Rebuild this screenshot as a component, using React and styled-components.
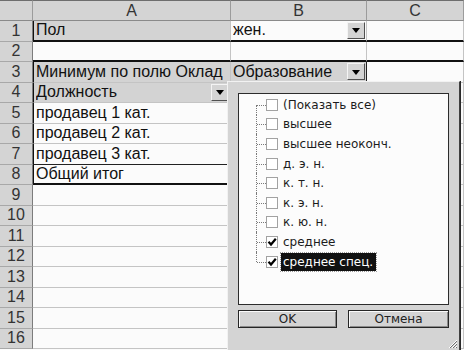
import React from 'react';
import styled, { createGlobalStyle, css } from 'styled-components';

const GlobalStyle = createGlobalStyle`
  html, body { margin: 0; padding: 0; background: #fbfbfb; overflow: hidden; }
  * { box-sizing: border-box; }
`;

const Sheet = styled.div`
  position: relative;
  width: 464px;
  height: 350px;
  overflow: hidden;
  font-family: "Liberation Sans", Arial, sans-serif;
  font-size: 16px;
  color: #111;
  background: #fbfbfb;
  display: grid;
  grid-template-columns: 33px 198px 136px 97px;
  grid-template-rows: 21px repeat(16, 20.5px);
`;

const ColHead = styled.div`
  background: #d4d4d4;
  border-top: 1px solid #6e6e6e;
  border-bottom: 1px solid #8a8a8a;
  border-right: 1px solid #9c9c9c;
  color: #333;
  display: flex;
  align-items: center;
  justify-content: center;
  padding-top: 1px;
`;

const RowHead = styled.div`
  background: #d4d4d4;
  border-right: 1px solid #7c7c7c;
  border-bottom: 1px solid #a8a8a8;
  color: #333;
  display: flex;
  align-items: center;
  justify-content: center;
`;

const Cell = styled.div`
  background: ${(p) => (p.$field ? '#d3d3d3' : '#fbfbfb')};
  border-bottom: 1px solid #c4c4c4;
  border-right: 1px solid #c4c4c4;
  display: flex;
  align-items: center;
  padding-left: 2px;
  white-space: nowrap;
  overflow: hidden;
  ${(p) => p.$darkLeft && css`border-left: 1px solid #111;`}
  ${(p) => p.$darkRight && css`border-right: 1px solid #222;`}
  ${(p) => p.$darkBottom && css`border-bottom: 1px solid #222;`}
  ${(p) => p.$thickBottom && css`border-bottom: 2px solid #111;`}
`;

const CellText = styled.span`
  flex: 1;
  overflow: hidden;
`;

const DropBtn = styled.span`
  flex: none;
  width: 18px;
  height: 17px;
  margin-right: 1px;
  background: #d4d4d4;
  border: 1px solid;
  border-color: #f4f4f4 #505050 #505050 #f4f4f4;
  display: flex;
  align-items: center;
  justify-content: center;
`;

const Arrow = styled.span`
  width: 0;
  height: 0;
  border-left: 4px solid transparent;
  border-right: 4px solid transparent;
  border-top: 5px solid #000;
  margin-top: 1px;
`;

const Popup = styled.div`
  position: absolute;
  left: 227px;
  top: 81px;
  width: 233px;
  height: 270px;
  background: #d4d4d4;
  border: 1px solid;
  border-color: #f2f2f2 #404040 #404040 #f2f2f2;
  box-shadow: 1px 0 0 #2a2a2a;
  padding: 11px 10px 0 10px;
  display: flex;
  flex-direction: column;
  gap: 5px;
  font-family: "DejaVu Sans", Verdana, sans-serif;
  font-size: 12px;
`;

const ListBox = styled.div`
  width: 211px;
  height: 212px;
  background: #fcfcfc;
  border: 1px solid #2c2c2c;
  padding-top: 1px;
  display: flex;
  flex-direction: column;
`;

const Item = styled.div`
  height: 19.6px;
  display: flex;
  align-items: center;
  padding-left: 17px;
`;

const Connector = styled.span`
  position: relative;
  align-self: stretch;
  width: 10px;
  flex: none;
  &::before {
    content: '';
    position: absolute;
    left: 0;
    top: ${(p) => (p.$first ? '50%' : '0')};
    bottom: ${(p) => (p.$last ? '50%' : '0')};
    border-left: 1px dotted #7a7a7a;
  }
  &::after {
    content: '';
    position: absolute;
    left: 1px;
    right: 0;
    top: 50%;
    border-top: 1px dotted #7a7a7a;
  }
`;

const Box = styled.span`
  flex: none;
  width: 12px;
  height: 12px;
  background: #fff;
  border: 1px solid #a2a2a2;
  margin-right: 3px;
  display: flex;
  align-items: center;
  justify-content: center;
`;

const Label = styled.span`
  height: 18px;
  line-height: 18px;
  padding: 0 3px 0 2px;
  color: ${(p) => (p.$selected ? '#fff' : '#1c1c1c')};
  background: ${(p) => (p.$selected ? '#111' : 'transparent')};
  outline: ${(p) => (p.$selected ? '1px dotted #9a9a9a' : 'none')};
  white-space: nowrap;
`;

const Buttons = styled.div`
  display: flex;
  gap: 11px;
`;

const Button = styled.div`
  width: ${(p) => p.$w}px;
  height: 18px;
  background: #d4d4d4;
  border: 1px solid #262626;
  box-shadow: inset 1px 1px 0 #fafafa, inset -1px -1px 0 #8a8a8a;
  display: flex;
  align-items: center;
  justify-content: center;
  color: #222;
`;

const Grip = styled.svg`
  position: absolute;
  right: 1px;
  bottom: 1px;
`;

const Check = () => (
  <svg width="10" height="10" viewBox="0 0 10 10">
    <path d="M1.5 4.8 L4 7.5 L8.8 1.8" fill="none" stroke="#000" strokeWidth="2.2" />
  </svg>
);

const rows = [
  { a: { text: 'Пол', field: true, darkLeft: true, thickBottom: true }, b: { text: 'жен.', drop: true, thickBottom: true }, c: { thickBottom: true } },
  { a: { thickBottom: true }, b: { thickBottom: true }, c: { thickBottom: true } },
  { a: { text: 'Минимум по полю Оклад', field: true, darkLeft: true }, b: { text: 'Образование', field: true, drop: true, darkRight: true }, c: {} },
  { a: { text: 'Должность', field: true, drop: true, darkLeft: true }, b: {}, c: {} },
  { a: { text: 'продавец 1 кат.', darkLeft: true }, b: {}, c: {} },
  { a: { text: 'продавец 2 кат.', darkLeft: true }, b: {}, c: {} },
  { a: { text: 'продавец 3 кат.', darkLeft: true, darkBottom: true }, b: {}, c: {} },
  { a: { text: 'Общий итог', darkLeft: true, thickBottom: true }, b: {}, c: {} },
  ...Array.from({ length: 8 }, () => ({ a: {}, b: {}, c: {} })),
];

const items = [
  { t: '(Показать все)' },
  { t: 'высшее' },
  { t: 'высшее неоконч.' },
  { t: 'д. э. н.' },
  { t: 'к. т. н.' },
  { t: 'к. э. н.' },
  { t: 'к. ю. н.' },
  { t: 'среднее', checked: true },
  { t: 'среднее спец.', checked: true, selected: true },
];

const SheetCell = ({ d }) => (
  <Cell
    $field={d.field}
    $darkLeft={d.darkLeft}
    $darkRight={d.darkRight}
    $darkBottom={d.darkBottom}
    $thickBottom={d.thickBottom}
  >
    <CellText>{d.text || ''}</CellText>
    {d.drop && (
      <DropBtn>
        <Arrow />
      </DropBtn>
    )}
  </Cell>
);

export default function App() {
  return (
    <>
      <GlobalStyle />
      <Sheet>
        <ColHead />
        <ColHead>A</ColHead>
        <ColHead>B</ColHead>
        <ColHead>C</ColHead>
        {rows.map((r, i) => (
          <React.Fragment key={i}>
            <RowHead>{i + 1}</RowHead>
            <SheetCell d={r.a} />
            <SheetCell d={r.b} />
            <SheetCell d={r.c} />
          </React.Fragment>
        ))}
        <Popup>
          <ListBox>
            {items.map((it, i) => (
              <Item key={i}>
                <Connector $first={i === 0} $last={i === items.length - 1} />
                <Box>{it.checked && <Check />}</Box>
                <Label $selected={it.selected}>{it.t}</Label>
              </Item>
            ))}
          </ListBox>
          <Buttons>
            <Button $w={99}>OK</Button>
            <Button $w={101}>Отмена</Button>
          </Buttons>
          <Grip width="11" height="11" viewBox="0 0 11 11">
            <path d="M10 2 L2 10 M10 5 L5 10 M10 8 L8 10" stroke="#fff" strokeWidth="1" />
            <path d="M10 3 L3 10 M10 6 L6 10 M10 9 L9 10" stroke="#707070" strokeWidth="1" />
          </Grip>
        </Popup>
      </Sheet>
    </>
  );
}
